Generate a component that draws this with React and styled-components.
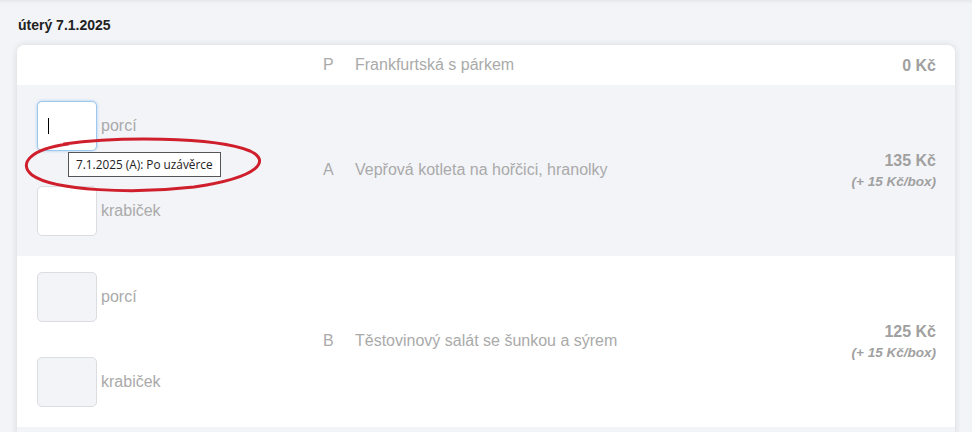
import React from "react";
import styled, { createGlobalStyle } from "styled-components";

const GlobalStyle = createGlobalStyle`
  html, body {
    margin: 0;
    padding: 0;
    background: #f3f4f8;
    font-family: "Liberation Sans", Arial, sans-serif;
  }
`;

const Page = styled.div`
  padding: 0 17px;
  overflow: hidden;
  height: 432px;
`;

const PrevShadow = styled.div`
  height: 4px;
  margin: 0 -17px;
  background: linear-gradient(#e6e7eb, #f3f4f8);
`;

const DayTitle = styled.h3`
  margin: 14px 0 0 1px;
  font-size: 14px;
  font-weight: bold;
  color: #222;
  line-height: 15px;
`;

const Card = styled.div`
  margin-top: 12px;
  background: #fff;
  border-radius: 8px;
  box-shadow: 0 0 7px rgba(0, 0, 0, 0.12);
  overflow: hidden;
`;

const Row = styled.div`
  --shift: ${p => (p.$compact ? "0px" : "3px")};
  display: grid;
  grid-template-columns: 286px 32px 1fr auto;
  align-items: center;
  padding: ${p => (p.$compact ? "0 19px 0 20px" : "15px 19px 20px 20px")};
  min-height: ${p => (p.$compact ? "40px" : "0")};
  background: ${p => (p.$gray ? "#f3f4f8" : "#fff")};
  border-top: ${p => (p.$compact ? "none" : "1px solid transparent")};
  color: #aaa;
  font-size: 16px;
`;

const NextRow = styled.div`
  height: 60px;
  background: #f3f4f8;
`;

const Amounts = styled.div`
  display: flex;
  flex-direction: column;
  gap: 35px;
`;

const AmountLine = styled.label`
  display: flex;
  align-items: center;
  gap: 4px;
  color: #aaa;
  font-size: 16px;
`;

const InputWrap = styled.div`
  position: relative;
  width: 60px;
  height: 50px;
`;

const Field = styled.input`
  box-sizing: border-box;
  width: 60px;
  height: 50px;
  border-radius: 5px;
  border: 1px solid ${p => (p.$focus ? "#9cc8ee" : "#dcdde1")};
  background: ${p => (p.$filled ? "#fff" : "#f3f4f8")};
  box-shadow: ${p => (p.$focus ? "0 0 3px rgba(90, 160, 230, 0.5)" : "none")};
  outline: none;
  font-size: 16px;
`;

const Caret = styled.span`
  position: absolute;
  left: 11px;
  top: 17px;
  width: 1px;
  height: 16px;
  background: #000;
`;

const Tooltip = styled.div`
  position: absolute;
  left: 31px;
  top: 51px;
  z-index: 2;
  white-space: nowrap;
  padding: 4px 7px;
  background: #fff;
  border: 1px solid #555;
  color: #222;
  font-family: "Open Sans", "DejaVu Sans", sans-serif;
  font-size: 11.8px;
  line-height: 15px;
`;

const Circle = styled.svg`
  position: absolute;
  left: -13px;
  top: 36px;
  z-index: 3;
  overflow: visible;
`;

const Cell = styled.div`
  margin-top: var(--shift);
  color: #aaa;
`;

const Price = styled.div`
  margin-top: var(--shift);
  text-align: right;
  font-weight: bold;
  color: #a0a0a0;
  font-size: 16px;
  line-height: 19px;
`;

const BoxFee = styled.div`
  font-size: 13.5px;
  font-style: italic;
  line-height: 17px;
  margin-top: 3px;
`;

const Amount = ({ label, filled, focus, note }) => (
  <AmountLine>
    <InputWrap>
      <Field $filled={filled} $focus={focus} readOnly />
      {focus && <Caret />}
      {note && (
        <>
          <Tooltip>{note}</Tooltip>
          <Circle width="240" height="56" viewBox="0 0 240 56">
            <path
              d="M 40 7 C 90 0, 190 -1, 226 14 C 246 23, 238 40, 170 50 C 110 57, 30 54, 8 38 C -6 27, 6 12, 44 7"
              fill="none"
              stroke="#cf1f2c"
              strokeWidth="3"
              strokeLinecap="round"
            />
          </Circle>
        </>
      )}
    </InputWrap>
    {label}
  </AmountLine>
);

const meals = [
  { code: "A", name: "Vepřová kotleta na hořčici, hranolky", price: 135, gray: true, filled: true },
  { code: "B", name: "Těstovinový salát se šunkou a sýrem", price: 125, gray: false, filled: false },
];

export default function App() {
  return (
    <>
      <GlobalStyle />
      <Page>
        <PrevShadow />
        <DayTitle>úterý 7.1.2025</DayTitle>
        <Card>
          <Row $compact>
            <div />
            <Cell>P</Cell>
            <Cell>Frankfurtská s párkem</Cell>
            <Price>0 Kč</Price>
          </Row>
          {meals.map((m, i) => (
            <Row key={m.code} $gray={m.gray}>
              <Amounts>
                <Amount
                  label="porcí"
                  filled={m.filled}
                  focus={i === 0}
                  note={i === 0 ? "7.1.2025 (A): Po uzávěrce" : null}
                />
                <Amount label="krabiček" filled={m.filled} />
              </Amounts>
              <Cell>{m.code}</Cell>
              <Cell>{m.name}</Cell>
              <Price>
                {m.price} Kč
                <BoxFee>(+ 15 Kč/box)</BoxFee>
              </Price>
            </Row>
          ))}
          <NextRow />
        </Card>
      </Page>
    </>
  );
}
